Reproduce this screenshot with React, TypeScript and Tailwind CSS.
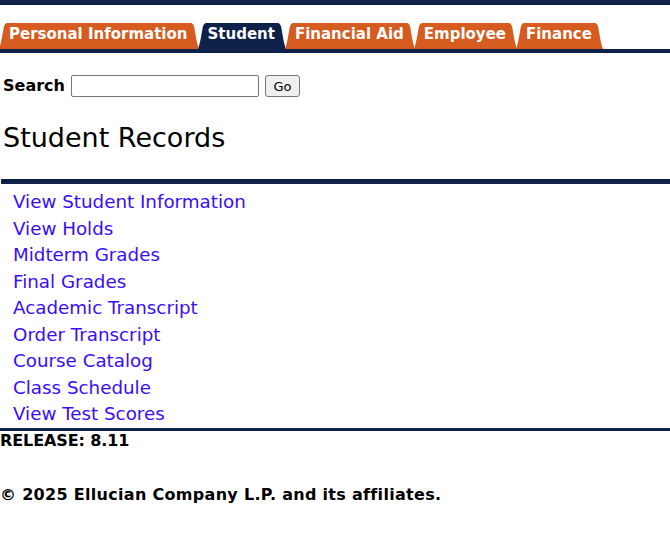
import React from "react";

const NAVY = "bg-[#0e2149]";

function Tab({ label, active }: { label: string; active?: boolean }) {
  const fill = active ? "#0e2149" : "#d65b1f";
  return (
    <div className="flex h-[26px] items-stretch -mr-[1px]">
      <svg width="8" height="26" viewBox="0 0 8 26" className="block shrink-0">
        <path d="M0 26 C2 21 3.6 11 4.6 5 Q5.4 0.4 8 0 L8 26 Z" fill={fill} />
      </svg>
      <div
        className={`flex items-center pl-[2px] pr-[3px] text-[15px] font-bold text-white leading-none ${
          active ? "bg-[#0e2149]" : "bg-[#d65b1f]"
        }`}
      >
        <span className="-mt-[4px]">{label}</span>
      </div>
      <svg width="8" height="26" viewBox="0 0 8 26" className="block shrink-0">
        <path d="M0 0 Q2.6 0.4 3.4 5 C4.4 11 6 21 8 26 L0 26 Z" fill={fill} />
      </svg>
    </div>
  );
}

const links = [
  "View Student Information",
  "View Holds",
  "Midterm Grades",
  "Final Grades",
  "Academic Transcript",
  "Order Transcript",
  "Course Catalog",
  "Class Schedule",
  "View Test Scores",
];

export default function App() {
  return (
    <div className="w-[670px] h-[547px] bg-white text-black font-['DejaVu_Sans',Verdana,sans-serif] overflow-hidden">
      <div className={`h-[5px] ${NAVY}`} />
      <div className="mt-[18px] flex -ml-[1px]">
        <Tab label="Personal Information" />
        <Tab label="Student" active />
        <Tab label="Financial Aid" />
        <Tab label="Employee" />
        <Tab label="Finance" />
      </div>
      <div className={`h-[4px] ${NAVY}`} />

      <div className="mt-[22px] flex items-center pl-[3px]">
        <span className="text-[16px] font-bold leading-none">Search</span>
        <input
          type="text"
          className="ml-[6px] h-[22px] w-[188px] border border-[#767676] rounded-[2px] bg-white"
        />
        <button className="ml-[6px] h-[22px] w-[35px] border border-[#767676] rounded-[3px] bg-[#efefef] text-[13px] leading-none text-black font-['DejaVu_Sans',sans-serif]">
          Go
        </button>
      </div>

      <h1 className="mt-[25px] pl-[3px] text-[27px] leading-[32px] font-normal">Student Records</h1>

      <div className={`mt-[25px] ml-[1px] h-[5px] ${NAVY}`} />

      <ul className="mt-[5px] pl-[13px]">
        {links.map((l) => (
          <li key={l} className="text-[18.3px] leading-[26.5px]">
            <a href="#" className="text-[#3a0cff]">
              {l}
            </a>
          </li>
        ))}
      </ul>

      <div className={`mt-[0.5px] h-[3px] ${NAVY}`} />
      <div className="text-[16px] font-bold leading-[19px] tracking-[-0.1px]">RELEASE: 8.11</div>
      <div className="mt-[35px] text-[16px] font-bold leading-[19px] tracking-[0.3px]">
        © 2025 Ellucian Company L.P. and its affiliates.
      </div>
    </div>
  );
}
